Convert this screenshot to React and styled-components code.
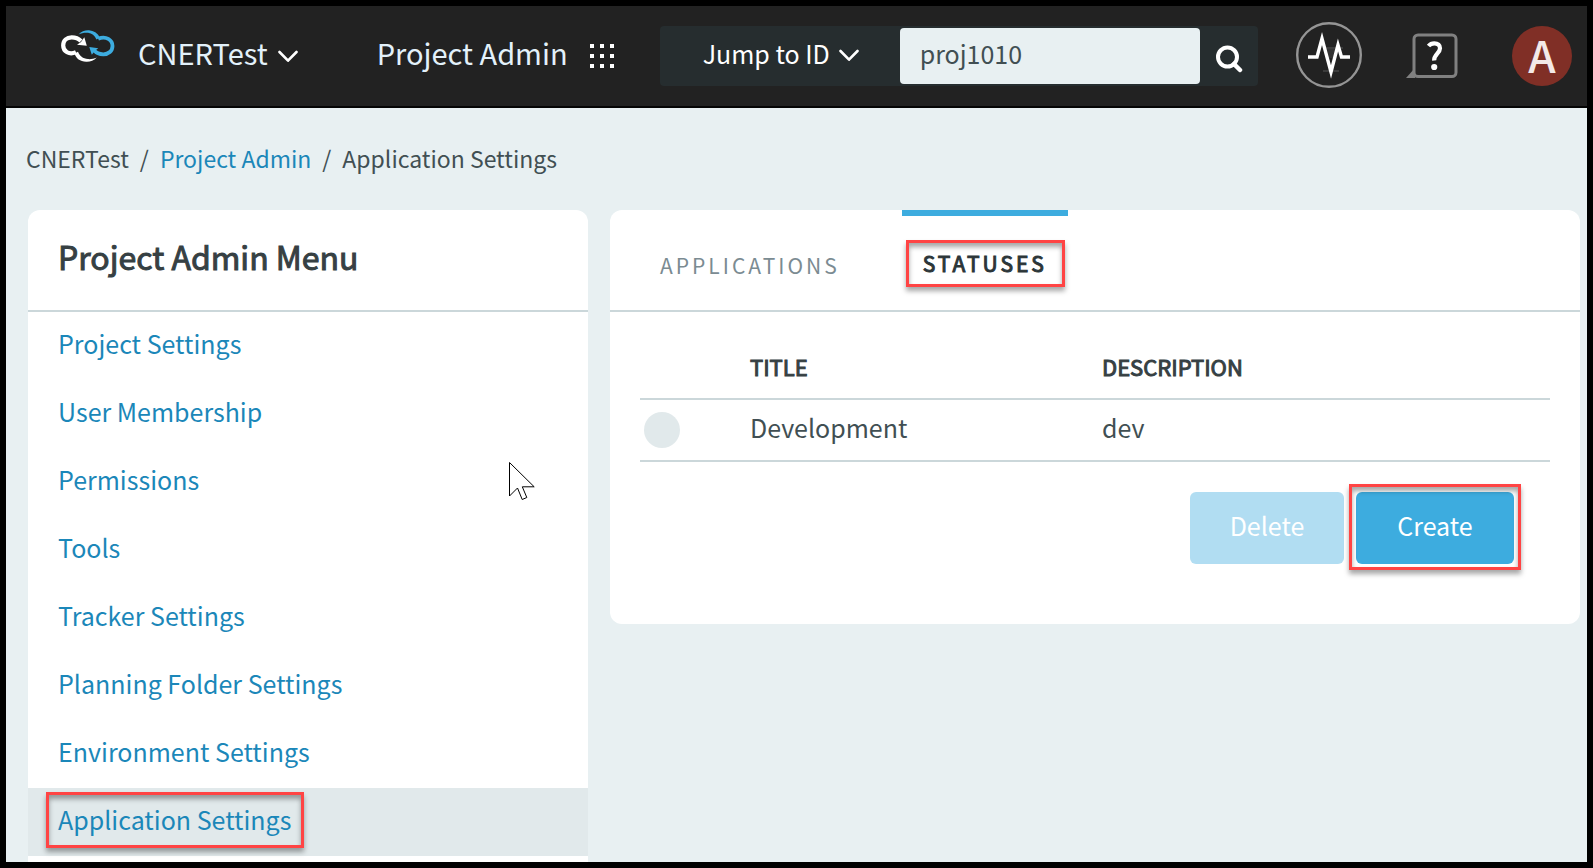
import React from "react";
import styled, { createGlobalStyle, css } from "styled-components";

const GlobalStyle = createGlobalStyle`
  *, *::before, *::after { box-sizing: border-box; }
  body {
    margin: 0;
    background: #000;
    color: #414f53;
    font-family: "Noto Sans CJK SC", "Noto Sans", sans-serif;
    font-size: 25px;
    line-height: 36px;
  }
  button, input, select { font: inherit; }
  a { text-decoration: none; }
`;

const Page = styled.div`
  display: flex;
  flex-direction: column;
  min-height: 100vh;
  border: 6px solid #000;
  background: #e8f0f2;
`;

const TopBar = styled.header`
  display: flex;
  align-items: center;
  height: 102px;
  padding: 0 15px 0 54px;
  border-bottom: 2px solid #050505;
  background: #222;
`;

const Brand = styled.div`
  display: flex;
  align-items: center;
  gap: 23px;
  margin-right: 79px;
`;

const LogoMark = styled.svg`
  margin-bottom: 20px;
`;

const HeaderButton = styled.button`
  display: flex;
  align-items: center;
  gap: ${(p) => p.$gap}px;
  padding: 0 0 9px;
  border: 0;
  background: none;
  color: #e3f1fa;
  font-size: 29px;
  line-height: 40px;
  white-space: nowrap;

  svg {
    margin-top: 9px;
  }
`;

const JumpBox = styled.form`
  display: grid;
  grid-template-columns: 240px 300px 58px;
  height: 60px;
  margin-left: 46px;
  padding: 2px 0;
  border-radius: 4px;
  background: #262d2f;
`;

const JumpPicker = styled.label`
  display: flex;
  align-items: center;
  justify-content: center;
  gap: 8px;
  padding: 0 0 6px 2px;
  color: #fff;

  svg {
    margin-top: 4px;
  }
`;

const JumpSelect = styled.select`
  appearance: none;
  padding: 0;
  border: 0;
  background: none;
  color: #fff;
`;

const JumpInput = styled.input`
  min-width: 0;
  padding: 0 20px 6px;
  border: 0;
  border-radius: 4px;
  background: #e8f0f2;
  color: #414f53;
`;

const IconButton = styled.button`
  display: flex;
  align-items: center;
  justify-content: center;
  padding: 0;
  border: 0;
  background: none;
`;

const SearchButton = styled(IconButton)`
  padding-top: 6px;
`;

const Shortcuts = styled.div`
  display: flex;
  align-items: center;
  gap: 44px;
  margin-left: auto;
`;

const Avatar = styled.button`
  width: 60px;
  height: 60px;
  margin-left: 10px;
  padding: 0 0 4px;
  border: 0;
  border-radius: 50%;
  background: #802f26;
  color: #f3e9e8;
  font-size: 44px;
  font-weight: 500;
  line-height: 56px;
`;

const Breadcrumb = styled.nav`
  display: flex;
  gap: 11px;
  padding: 32px 20px 34px;
  font-size: 23px;
`;

const linkColor = css`
  color: #1b87b9;
`;

const heavy = css`
  font-weight: 400;
  -webkit-text-stroke: 1px currentColor;
`;

const CrumbLink = styled.a`
  ${linkColor}
`;

const Columns = styled.main`
  display: grid;
  flex: 1;
  grid-template-columns: minmax(0, 56fr) minmax(0, 97fr);
  gap: 22px;
  padding: 0 7px 0 22px;
`;

const Card = styled.section`
  position: relative;
  align-self: ${(p) => (p.$fill ? "stretch" : "start")};
  border-radius: ${(p) => (p.$fill ? "12px 12px 0 0" : "12px")};
  background: #fff;
`;

const CardHead = styled.div`
  display: flex;
  height: 102px;
  border-bottom: 2px solid #cbd7da;
`;

const MenuTitle = styled.h2`
  ${heavy}
  margin: 0;
  padding: 26px 30px;
  color: #364043;
  font-size: 32px;
  line-height: 40px;
`;

const Menu = styled.ul`
  margin: 0;
  padding: 0 0 6px;
  list-style: none;
`;

const MenuItem = styled.li`
  display: flex;
  height: 68px;
  padding: 13px 30px;
  background: ${(p) => (p.$active ? "#e1e9eb" : "none")};
`;

const MenuLink = styled.a`
  ${linkColor}
  position: relative;
  height: 36px;
`;

const Marker = styled.span`
  position: absolute;
  inset: ${(p) => p.$inset};
  border: 3px solid #ff4444;
  box-shadow: 0 4px 5px rgba(0, 0, 0, 0.35), inset 0 4px 5px rgba(0, 0, 0, 0.35);
  pointer-events: none;
`;

const Pointer = styled.svg`
  position: absolute;
  top: 251px;
  right: 52px;
  pointer-events: none;
`;

const Tabs = styled(CardHead)`
  gap: 42px;
  padding: 0 30px;
`;

const Tab = styled.button`
  position: relative;
  padding: ${(p) => (p.$active ? "0 21px" : "4px 20px 0")};
  border: 0;
  border-top: 6px solid ${(p) => (p.$active ? "#3dacdf" : "transparent")};
  background: none;
  color: ${(p) => (p.$active ? "#2b3538" : "#7b8b92")};
  font-size: 21px;
  letter-spacing: 3px;
  ${(p) => p.$active && heavy}
`;

const PanelBody = styled.div`
  padding: 26px 30px 60px;
`;

const Table = styled.table`
  width: 100%;
  border-collapse: separate;
  border-spacing: 0;
  table-layout: fixed;
  text-align: left;
`;

const Cell = styled.td`
  height: 62px;
  padding: 0 0 6px;
  border-bottom: 2px solid #cbd7da;
`;

const HeadCell = styled(Cell)`
  ${heavy}
  padding-bottom: 4px;
  color: #364043;
  font-size: 22px;
`;

const Column = styled.col`
  width: ${(p) => p.$width};
`;

const RowRadio = styled.input`
  display: block;
  appearance: none;
  width: 36px;
  height: 36px;
  margin: 6px 4px 0;
  border-radius: 50%;
  background: #e1e9eb;
`;

const Actions = styled.div`
  display: flex;
  justify-content: flex-end;
  gap: 12px;
  padding: 30px 36px 0 0;
`;

const ActionButton = styled.button`
  position: relative;
  min-width: 158px;
  height: 72px;
  padding: 0 36px 6px;
  border: 0;
  border-radius: 6px;
  background: #3dacdf;
  color: #fff;

  &:disabled {
    min-width: 154px;
    background: #b1ddf2;
  }
`;

function Chevron() {
  return (
    <svg width="20" height="13" viewBox="0 0 20 13" fill="none" stroke="#fff" strokeWidth="2.6" strokeLinecap="round" strokeLinejoin="round" aria-hidden="true">
      <path d="M1.5 2 10 10.7 18.5 2" />
    </svg>
  );
}

function Logo() {
  return (
    <LogoMark width="55" height="33" viewBox="0 0 55 33" role="img" aria-label="Home">
      <path d="M21 11C18.500 8.400 15.500 7.300 11.700 7.300 6.700 7.300 3.200 10.700 3.200 15.500c0 6 6 9.700 12.700 6.700" fill="none" stroke="#fff" strokeWidth="4.200" />
      <path fill="#fff" d="M24.300 7.300 26.800 15.700 17 14.700l4-2.700ZM14.500 23.500l3.500-1.700c1.500 4.200 5 7 10 7.300 3.200.2 6-.4 8.800-1.600-3 3.200-6.800 4.500-10.600 4.300C20 31.500 16 28.500 14.500 23.500Z" />
      <path d="M38.200 8.700C46 5.500 52.500 9.800 52.500 16c0 5-4 8.300-9.200 8.300-4 0-7-1.300-9.300-4" fill="none" stroke="#3dacdf" strokeWidth="3.800" />
      <path fill="#3dacdf" d="M29.300 17 38.300 18.300 35 20.700 31.800 24.800ZM18.500 4.500C21.500 1.200 25 0 29 .2c4.700.4 8.500 2.800 11 7.200l-3.500 2C34.500 5.500 32 3.200 28 2.700c-3.500-.3-6.500.3-9.500 1.800Z" />
    </LogoMark>
  );
}

function AppsGrid() {
  const steps = [0, 10, 20];
  return (
    <svg width="24" height="24" fill="#fff" aria-hidden="true">
      {steps.map((y) => steps.map((x) => <rect key={`${x}-${y}`} x={x} y={y} width="4" height="4" />))}
    </svg>
  );
}

function SearchIcon() {
  return (
    <svg width="28" height="28" viewBox="0 0 28 28" fill="none" stroke="#fff" strokeWidth="4" aria-hidden="true">
      <circle cx="12.500" cy="12" r="9.500" />
      <path d="m19 19 6 6" strokeWidth="4.500" strokeLinecap="round" />
    </svg>
  );
}

function ActivityIcon() {
  return (
    <svg width="66" height="68" viewBox="0 0 66 68" fill="none" aria-hidden="true">
      <path d="M27 26h20M27 49h16" stroke="#3c3c3c" strokeWidth="2" />
      <path d="M31 27h11l-4 9h-5Z" fill="#333" />
      <circle cx="33" cy="33" r="31.800" stroke="#959595" strokeWidth="2.400" />
      <path d="M12 35h9l5-18.500L35 50l7-27 3.500 12H54" stroke="#fff" strokeWidth="3.400" />
    </svg>
  );
}

function HelpIcon() {
  return (
    <svg width="52" height="46" viewBox="0 0 52 46" fill="none" aria-hidden="true">
      <rect x="8" y="2" width="42" height="41.500" rx="4" stroke="#808080" strokeWidth="3" />
      <path d="M9 35v10H0Z" fill="#808080" />
      <path d="M22.500 13c1.500-1.800 3.500-2.700 5.800-2.700 3.600 0 5.700 1.900 5.700 4.900 0 5-6.300 6.200-5.800 12.300" stroke="#fff" strokeWidth="4.200" />
      <circle cx="28.200" cy="34" r="3.100" fill="#fff" />
    </svg>
  );
}

const menuItems = [
  "Project Settings",
  "User Membership",
  "Permissions",
  "Tools",
  "Tracker Settings",
  "Planning Folder Settings",
  "Environment Settings",
  "Application Settings",
];

const statuses = [{ title: "Development", description: "dev" }];

export default function App() {
  return (
    <>
      <GlobalStyle />
      <Page>
        <TopBar>
          <Brand>
            <Logo />
            <HeaderButton type="button" $gap={10}>
              CNERTest <Chevron />
            </HeaderButton>
          </Brand>
          <HeaderButton type="button" $gap={22}>
            Project Admin <AppsGrid />
          </HeaderButton>
          <JumpBox>
            <JumpPicker>
              <JumpSelect aria-label="Jump target">
                <option>Jump to ID</option>
              </JumpSelect>
              <Chevron />
            </JumpPicker>
            <JumpInput aria-label="ID" defaultValue="proj1010" />
            <SearchButton type="button" aria-label="Search">
              <SearchIcon />
            </SearchButton>
          </JumpBox>
          <Shortcuts>
            <IconButton type="button" aria-label="Activity">
              <ActivityIcon />
            </IconButton>
            <IconButton type="button" aria-label="Help">
              <HelpIcon />
            </IconButton>
            <Avatar type="button" aria-label="Account">A</Avatar>
          </Shortcuts>
        </TopBar>

        <Breadcrumb aria-label="Breadcrumb">
          <span>CNERTest</span>
          <span>/</span>
          <CrumbLink href="#admin">Project Admin</CrumbLink>
          <span>/</span>
          <span>Application Settings</span>
        </Breadcrumb>

        <Columns>
          <Card $fill>
            <CardHead>
              <MenuTitle>Project Admin Menu</MenuTitle>
            </CardHead>
            <Menu>
              {menuItems.map((label) => {
                const active = label === "Application Settings";
                return (
                  <MenuItem key={label} $active={active}>
                    <MenuLink href="#menu" aria-current={active ? "page" : undefined}>
                      {label}
                      {active && <Marker $inset="-9px -13px -11px -12px" />}
                    </MenuLink>
                  </MenuItem>
                );
              })}
            </Menu>
            <Pointer width="28" height="40" viewBox="0 0 28 40" fill="#fff" stroke="#000" strokeWidth="1" aria-hidden="true">
              <path d="M1.500 1.500v33.500l8-8 4.700 11.500 4.600-2-4.500-10.700h11.900Z" />
            </Pointer>
          </Card>

          <Card>
            <Tabs role="tablist">
              <Tab type="button" role="tab" aria-selected="false">APPLICATIONS</Tab>
              <Tab type="button" role="tab" aria-selected="true" $active>
                STATUSES
                <Marker $inset="24px 3px 23px 4px" />
              </Tab>
            </Tabs>
            <PanelBody>
              <Table>
                <colgroup>
                  <Column $width="110px" />
                  <Column $width="352px" />
                  <Column $width="auto" />
                </colgroup>
                <thead>
                  <tr>
                    <HeadCell />
                    <HeadCell as="th" scope="col">TITLE</HeadCell>
                    <HeadCell as="th" scope="col">DESCRIPTION</HeadCell>
                  </tr>
                </thead>
                <tbody>
                  {statuses.map((s) => (
                    <tr key={s.title}>
                      <Cell>
                        <RowRadio type="radio" name="status" aria-label={s.title} />
                      </Cell>
                      <Cell>{s.title}</Cell>
                      <Cell>{s.description}</Cell>
                    </tr>
                  ))}
                </tbody>
              </Table>
              <Actions>
                <ActionButton type="button" disabled>Delete</ActionButton>
                <ActionButton type="button">
                  Create
                  <Marker $inset="-8px -7px -6px -7px" />
                </ActionButton>
              </Actions>
            </PanelBody>
          </Card>
        </Columns>
      </Page>
    </>
  );
}
